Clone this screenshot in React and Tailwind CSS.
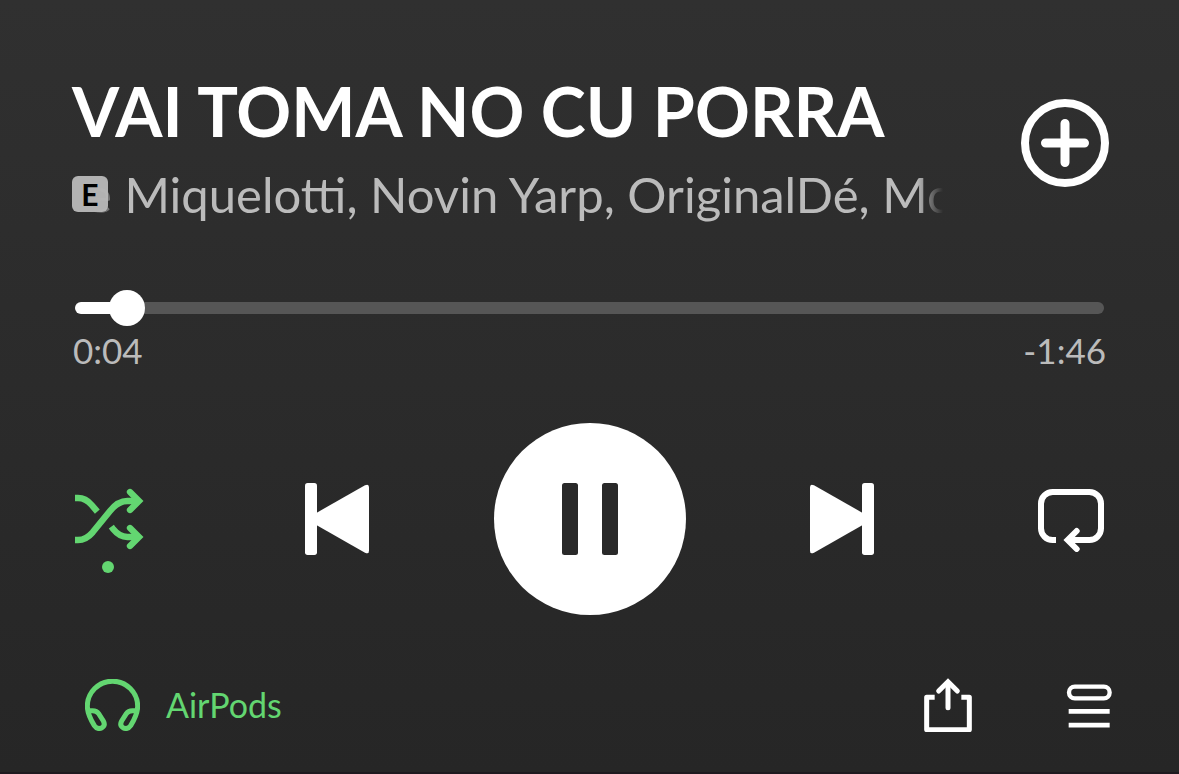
import React, { useState } from "react";

const DURATION = 110;

function formatTime(seconds) {
  const s = Math.ceil(seconds);
  return `${Math.floor(s / 60)}:${String(s % 60).padStart(2, "0")}`;
}

function PlusCircleIcon() {
  return (
    <svg viewBox="0 0 88 88" className="size-[88px]" fill="none" stroke="currentColor" aria-hidden="true">
      <circle cx="44" cy="44" r="40" strokeWidth="8" />
      <path d="M44 24.500V63.500M24.500 44H63.500" strokeWidth="9" strokeLinecap="round" />
    </svg>
  );
}

function ShuffleIcon() {
  return (
    <svg viewBox="45 -36 210 336" className="h-[112px] w-[70px]" fill="none" stroke="currentColor" strokeWidth="19" aria-hidden="true">
      <path d="M45 69H54C72 69 84 77 95 90L112 110" />
      <path d="M45 195H54C74 195 86 186 98 172L150 108C166 88 180 78 202 78H236" />
      <path d="M154 155L160 163C172 178 184 186 202 186H236" />
      <path d="M210 51L237 78L210 105" strokeLinecap="round" />
      <path d="M210 159L237 186L210 213" strokeLinecap="round" />
      <circle cx="144" cy="276" r="18" fill="currentColor" stroke="none" />
    </svg>
  );
}

function PreviousIcon() {
  return (
    <svg viewBox="0 0 192 216" className="h-[72px] w-[64px]" fill="currentColor" aria-hidden="true">
      <rect width="36" height="216" rx="8" />
      <path d="M30 92L180 7Q192 1 192 13V203Q192 215 180 209L30 124Z" />
    </svg>
  );
}

function NextIcon() {
  return (
    <svg viewBox="0 0 192 216" className="h-[72px] w-[64px]" fill="currentColor" aria-hidden="true">
      <rect x="156" width="36" height="216" rx="8" />
      <path d="M162 92L12 7Q0 1 0 13V203Q0 215 12 209L162 124Z" />
    </svg>
  );
}

function PauseIcon() {
  return (
    <svg viewBox="0 0 56 72" className="h-[72px] w-[56px]" fill="currentColor" aria-hidden="true">
      <rect width="16" height="72" rx="2.5" />
      <rect x="40" width="16" height="72" rx="2.5" />
    </svg>
  );
}

function RepeatIcon() {
  return (
    <svg viewBox="54 48 198 198" className="size-[66px]" fill="none" stroke="currentColor" strokeWidth="18" aria-hidden="true">
      <path d="M108 210H98A35 35 0 0 1 63 175V101A35 35 0 0 1 98 66H208A35 35 0 0 1 243 101V175A35 35 0 0 1 208 210H144" />
      <path d="M170 183L143 210L170 237" strokeLinecap="round" />
    </svg>
  );
}

function HeadphonesIcon() {
  return (
    <svg viewBox="45 42 165 156" className="h-[52px] w-[55px]" fill="none" stroke="currentColor" strokeWidth="15" aria-hidden="true">
      <path d="M53 137H68Q80 137 86 146L100 168Q107 181 96 188Q82 195 73 182Q52 148 52 124A75.500 75.500 0 0 1 203 124Q203 148 182 182Q173 195 159 188Q148 181 155 168L169 146Q175 137 187 137H202" />
    </svg>
  );
}

function ShareIcon() {
  return (
    <svg viewBox="72 39 144 162" className="h-[54px] w-[48px]" fill="none" stroke="currentColor" strokeWidth="15" aria-hidden="true">
      <path d="M104 97H80V194H208V97H184" strokeLinejoin="round" />
      <path d="M144 54V128" strokeLinecap="round" />
      <path d="M116 78L144 50L172 78" strokeLinecap="round" />
    </svg>
  );
}

function QueueIcon() {
  return (
    <svg viewBox="498 55 138 135" className="h-[45px] w-[46px]" fill="none" stroke="currentColor" aria-hidden="true">
      <rect x="507" y="66" width="122" height="35" rx="17.5" strokeWidth="13" />
      <path d="M506 140H629M506 181.500H629" strokeWidth="14" />
    </svg>
  );
}

export default function App() {
  const [position, setPosition] = useState(3.8);
  const ratio = position / DURATION;
  const fill = `calc(18px + (100% - 36px) * ${ratio})`;

  return (
    <main className="flex min-h-screen flex-col border-b-2 border-[#1f1a1f] bg-linear-to-b from-[#303030] to-[#262626] font-['Lato','Open_Sans',sans-serif] text-white">
      <header className="flex items-start justify-between pt-[71px] pr-[70px] pl-[72px]">
        <div className="min-w-0">
          <h1 className="text-[68px] leading-[80px] font-bold whitespace-nowrap">VAI TOMA NO CU PORRA</h1>
          <div className="mt-[15px] flex w-[871px] items-center">
            <span
              aria-label="Explicit"
              className="flex size-9 shrink-0 items-center justify-center rounded-md bg-[#b2b2b2] text-[30px] leading-9 font-bold text-black"
            >
              E
            </span>
            <p className="-ml-[22px] min-w-0 flex-1 overflow-hidden mask-[linear-gradient(to_right,transparent_6px,black_38px,black_calc(100%-26px),transparent)] text-[49px] leading-[56px] whitespace-nowrap text-[#bbbbbb]">
              e Miquelotti, Novin Yarp, OriginalDé, Mc
            </p>
          </div>
        </div>
        <button type="button" aria-label="Add to library" className="mt-7 shrink-0">
          <PlusCircleIcon />
        </button>
      </header>

      <section className="mt-[68px] px-[75px]">
        <input
          type="range"
          aria-label="Playback position"
          min="0"
          max={DURATION}
          step="any"
          value={position}
          onChange={(e) => setPosition(Number(e.target.value))}
          style={{ "--fill": fill }}
          className="block h-9 w-full cursor-pointer appearance-none bg-transparent outline-none [&::-webkit-slider-runnable-track]:h-3 [&::-webkit-slider-runnable-track]:rounded-full [&::-webkit-slider-runnable-track]:bg-[linear-gradient(to_right,#fff_var(--fill),#565656_var(--fill))] [&::-webkit-slider-thumb]:-mt-3 [&::-webkit-slider-thumb]:size-9 [&::-webkit-slider-thumb]:appearance-none [&::-webkit-slider-thumb]:rounded-full [&::-webkit-slider-thumb]:bg-white"
        />
        <div className="-mx-[2px] mt-1 flex justify-between text-[35px] leading-10 text-[#bbbbbb]">
          <span>{formatTime(position)}</span>
          <span>-{formatTime(DURATION - position - 0.5)}</span>
        </div>
      </section>

      <section className="mt-[53px] flex items-center justify-between px-[75px]">
        <button type="button" aria-label="Shuffle" aria-pressed="true" className="flex w-[105px] justify-start text-[#63d671]">
          <ShuffleIcon />
        </button>
        <button type="button" aria-label="Previous">
          <PreviousIcon />
        </button>
        <button type="button" aria-label="Pause" className="flex size-48 items-center justify-center rounded-full bg-white text-[#292929]">
          <PauseIcon />
        </button>
        <button type="button" aria-label="Next">
          <NextIcon />
        </button>
        <button type="button" aria-label="Repeat" className="flex w-[105px] justify-end">
          <RepeatIcon />
        </button>
      </section>

      <footer className="mt-[63px] flex items-center justify-between pr-[67px] pl-[85px]">
        <button type="button" className="flex items-center gap-[26px] text-[34px] leading-10 text-[#63d671]">
          <HeadphonesIcon />
          AirPods
        </button>
        <div className="flex items-center gap-[94px]">
          <button type="button" aria-label="Share">
            <ShareIcon />
          </button>
          <button type="button" aria-label="Queue">
            <QueueIcon />
          </button>
        </div>
      </footer>
    </main>
  );
}
